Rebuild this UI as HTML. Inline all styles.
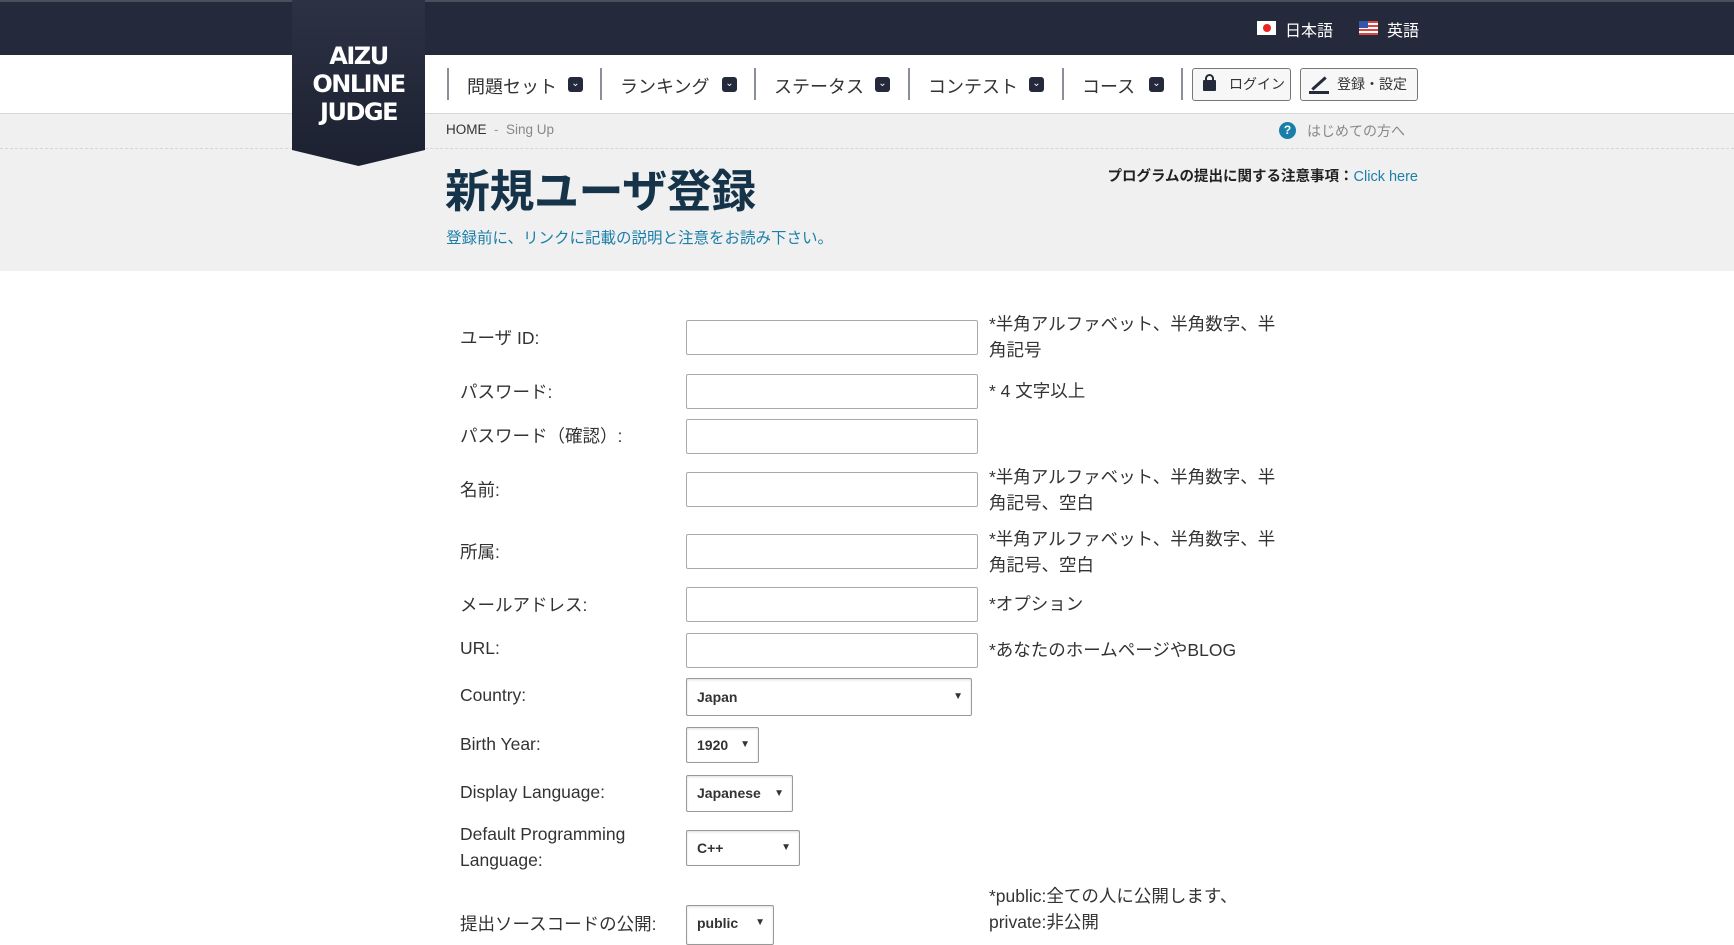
<!DOCTYPE html>
<html><head><meta charset="utf-8">
<style>
*{margin:0;padding:0;box-sizing:border-box}
body{width:1734px;height:940px;overflow:hidden;background:#fff;font-family:"Liberation Sans","Noto Sans CJK JP",sans-serif;color:#333;position:relative}
.a{position:absolute;white-space:nowrap}
#top{left:0;top:0;width:1734px;height:55px;background:#242a3b;border-top:2px solid #4a4f5c}
#nav{left:0;top:55px;width:1734px;height:59px;background:#fff;border-bottom:1px solid #d8d8d8}
#gray{left:0;top:114px;width:1734px;height:157px;background:#f0f0f0}
#dash{left:0;top:148px;width:1734px;border-top:1px dashed #d6d6d6}
#logo{left:292px;top:0;width:133px;height:166px;background:linear-gradient(#2c3244,#1c2131);clip-path:polygon(0 0,100% 0,100% 150px,50% 166px,0 150px);color:#fff;font-weight:bold;font-size:24px;line-height:28px;text-align:center;padding-top:42px;font-family:"DejaVu Sans","Liberation Sans",sans-serif;letter-spacing:-1.5px}
.ni{font-size:18px;color:#333;top:73px}
.sep{top:68px;width:2px;height:32px;background:#8a8f99}
.chev{top:77px;width:15px;height:15px;background:#242a3b;border-radius:3px;color:#fff;font-size:10px;line-height:13px;text-align:center}
.btn{top:68px;height:33px;border:1px solid #777;border-radius:3px;background:#f7f7f7;font-size:14px;line-height:31px;color:#333;padding-left:36px}
.lab{left:460px;font-size:17.5px;color:#333}
.inp{left:686px;width:292px;height:35px;border:1px solid #aaa;border-radius:2px;background:#fff}
.sel{left:686px;border:1px solid #999;border-radius:2px;background:#fff;font-size:14px;font-weight:bold;color:#333;padding-left:10px;box-shadow:inset 0 1px 2px #ddd}
.sel span{position:absolute;right:8px;font-size:10px}
.hint{left:989px;font-size:17.5px;color:#333;line-height:26px}
</style></head><body>
<div class="a" id="top"></div>
<div class="a" id="nav"></div>
<div class="a" id="gray"></div>
<div class="a" id="dash"></div>
<div class="a" id="logo">AIZU<br>ONLINE<br>JUDGE</div>

<div class="a" style="left:1257px;top:21px;width:19px;height:14px;background:#fff"><div style="width:8px;height:8px;border-radius:50%;background:#e22;margin:3px auto"></div></div>
<div class="a" style="left:1285px;top:17px;font-size:16px;color:#fff">日本語</div>
<div class="a" style="left:1359px;top:21px;width:19px;height:14px;background:repeating-linear-gradient(#d44 0 2px,#fff 2px 4px)"><div style="width:9px;height:7px;background:#35a"></div></div>
<div class="a" style="left:1387px;top:17px;font-size:16px;color:#fff">英語</div>

<div class="a sep" style="left:447px"></div>
<div class="a ni" style="left:467px">問題セット</div><div class="a chev" style="left:568px">&#8964;</div>
<div class="a sep" style="left:600px"></div>
<div class="a ni" style="left:620px">ランキング</div><div class="a chev" style="left:722px">&#8964;</div>
<div class="a sep" style="left:754px"></div>
<div class="a ni" style="left:774px">ステータス</div><div class="a chev" style="left:875px">&#8964;</div>
<div class="a sep" style="left:908px"></div>
<div class="a ni" style="left:928px">コンテスト</div><div class="a chev" style="left:1029px">&#8964;</div>
<div class="a sep" style="left:1062px"></div>
<div class="a ni" style="left:1082px">コース</div><div class="a chev" style="left:1149px">&#8964;</div>
<div class="a sep" style="left:1181px"></div>
<div class="a btn" style="left:1192px;width:99px">ログイン<div class="a" style="left:10px;top:11px;width:13px;height:11px;background:#242a3b;border-radius:1px"></div><div class="a" style="left:12px;top:5px;width:9px;height:9px;border:2px solid #242a3b;border-radius:5px 5px 0 0"></div></div>
<div class="a btn" style="left:1300px;width:118px">登録・設定<div class="a" style="left:8px;top:22px;width:20px;height:3px;background:#242a3b"></div><div class="a" style="left:9px;top:13px;width:18px;height:3px;background:#242a3b;transform:rotate(-42deg)"></div></div>

<div class="a" style="left:446px;top:122px;font-size:13.5px;color:#333">HOME <span style="color:#999">&nbsp;-&nbsp;&nbsp;</span><span style="color:#888">Sing Up</span></div>
<div class="a" style="left:1279px;top:122px;width:17px;height:17px;border-radius:50%;background:#1a7fa8;color:#fff;font-size:12px;font-weight:bold;text-align:center;line-height:17px">?</div>
<div class="a" style="left:1307px;top:121px;font-size:14px;color:#888">はじめての方へ</div>

<div class="a" style="left:445px;top:155px;font-size:45px;font-weight:bold;color:#163449;letter-spacing:-0.5px">新規ユーザ登録</div>
<div class="a" style="left:446px;top:226px;font-size:15.5px;color:#1a7fa8">登録前に、リンクに記載の説明と注意をお読み下さい。</div>
<div class="a" style="right:316px;top:165px;font-size:14.5px;font-weight:bold;color:#222">プログラムの提出に関する注意事項：<span style="font-weight:normal;color:#1a7fa8">Click here</span></div>

<div class="a lab" style="top:325px">ユーザ ID:</div><div class="a inp" style="top:320px"></div>
<div class="a hint" style="top:311px">*半角アルファベット、半角数字、半<br>角記号</div>
<div class="a lab" style="top:379px">パスワード:</div><div class="a inp" style="top:374px"></div>
<div class="a hint" style="top:378px">* 4 文字以上</div>
<div class="a lab" style="top:423px">パスワード（確認）:</div><div class="a inp" style="top:419px"></div>
<div class="a lab" style="top:477px">名前:</div><div class="a inp" style="top:472px"></div>
<div class="a hint" style="top:464px">*半角アルファベット、半角数字、半<br>角記号、空白</div>
<div class="a lab" style="top:539px">所属:</div><div class="a inp" style="top:534px"></div>
<div class="a hint" style="top:526px">*半角アルファベット、半角数字、半<br>角記号、空白</div>
<div class="a lab" style="top:592px">メールアドレス:</div><div class="a inp" style="top:587px"></div>
<div class="a hint" style="top:591px">*オプション</div>
<div class="a lab" style="top:638px">URL:</div><div class="a inp" style="top:633px"></div>
<div class="a hint" style="top:637px">*あなたのホームページやBLOG</div>

<div class="a lab" style="top:685px">Country:</div>
<div class="a sel" style="top:678px;width:286px;height:38px;line-height:36px">Japan<span>▼</span></div>
<div class="a lab" style="top:734px">Birth Year:</div>
<div class="a sel" style="top:727px;width:73px;height:36px;line-height:34px">1920<span>▼</span></div>
<div class="a lab" style="top:782px">Display Language:</div>
<div class="a sel" style="top:775px;width:107px;height:37px;line-height:35px">Japanese<span>▼</span></div>
<div class="a lab" style="top:821px;line-height:26px">Default Programming<br>Language:</div>
<div class="a sel" style="top:830px;width:114px;height:36px;line-height:34px">C++<span>▼</span></div>
<div class="a lab" style="top:911px">提出ソースコードの公開:</div>
<div class="a sel" style="top:905px;width:88px;height:40px;line-height:34px">public<span>▼</span></div>
<div class="a hint" style="top:883px">*public:全ての人に公開します、<br>private:非公開</div>
</body></html>
